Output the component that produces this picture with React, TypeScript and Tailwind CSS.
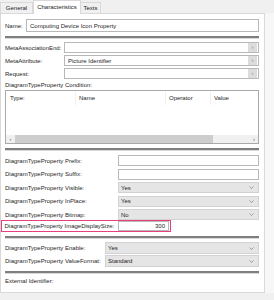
import { ReactNode } from 'react'

const Separator = () => (
  <div className="h-[3px] border-t-2 border-[#7f7f7f] border-b border-b-[#dadada]" />
)

function TextBox({ value, right, button }: { value?: string; right?: boolean; button?: boolean }) {
  return (
    <div className="flex-1 h-full flex items-center border border-[#b8b8b8] bg-white">
      <span className={`flex-1 px-[3px] leading-none ${right ? 'text-right' : ''}`}>{value}</span>
      {button && (
        <div className="w-[9px] h-[9px] mr-px flex items-center justify-center bg-[#dcdcdc] text-[#8a8a8a] text-[6px]">
          ›
        </div>
      )}
    </div>
  )
}

function Select({ value }: { value: string }) {
  return (
    <div className="flex-1 h-full flex items-center border border-[#d2d2d2] bg-[#e5e5e5] px-[2px]">
      <span className="flex-1 leading-none">{value}</span>
      <svg width="5" height="3" viewBox="0 0 5 3" className="mr-[2px]">
        <path d="M0.5 0.5 L2.5 2.5 L4.5 0.5" fill="none" stroke="#8a8a8a" strokeWidth="0.8" />
      </svg>
    </div>
  )
}

function Row({ label, labelW, h = 'h-[11px]', mt, children }: { label: string; labelW: string; h?: string; mt: string; children: ReactNode }) {
  return (
    <div className={`flex items-center ${h} ${mt}`}>
      <div className={`${labelW} shrink-0 leading-none whitespace-nowrap`}>{label}</div>
      {children}
    </div>
  )
}

export default function App() {
  return (
    <div className="w-[274px] h-[300px] bg-[#f0f0f0] font-['Liberation_Sans',Arial,sans-serif] text-[6px] text-[#1e1e1e] overflow-hidden">
      {/* Tabs */}
      <div className="flex items-end h-[13px] relative z-10">
        <div className="h-[11px] w-[33px] flex items-center justify-center border border-b-0 border-[#d9d9d9] bg-[#f0f0f0]">
          General
        </div>
        <div className="h-[14px] w-[48px] -mb-px flex items-center justify-center border border-b-0 border-[#d9d9d9] bg-white">
          Characteristics
        </div>
        <div className="h-[11px] w-[20px] flex items-center justify-center border border-b-0 border-l-0 border-[#d9d9d9] bg-[#f0f0f0]">
          Texts
        </div>
      </div>

      <div className="flex">
        {/* Panel */}
        <div className="w-[265px] h-[280px] bg-white border border-[#d9d9d9] pl-[4px] pr-[5px] flex flex-col">
          <Row label="Name:" labelW="w-[21px]" h="h-[13px]" mt="mt-[5px]">
            <TextBox value="Computing Device Icon Property" />
          </Row>
          <div className="mt-[4px]"><Separator /></div>

          <Row label="MetaAssociationEnd:" labelW="w-[59px]" mt="mt-[3px]">
            <TextBox button />
          </Row>
          <Row label="MetaAttribute:" labelW="w-[59px]" mt="mt-[2px]">
            <TextBox value="Picture Identifier" button />
          </Row>
          <Row label="Request:" labelW="w-[59px]" mt="mt-[2px]">
            <TextBox button />
          </Row>

          <div className="h-[10px] mt-px flex items-center leading-none">DiagramTypeProperty Condition:</div>

          {/* Condition table */}
          <div className="h-[54px] border border-[#a9a9a9] flex flex-col">
            <div className="flex h-[14px] items-center leading-none">
              <div className="w-[70px] h-full pl-[4px] flex items-center border-r border-[#f0f0f0]">Type:</div>
              <div className="w-[90px] h-full pl-[3px] flex items-center border-r border-[#f0f0f0]">Name</div>
              <div className="w-[45px] h-full pl-[3px] flex items-center border-r border-[#f0f0f0]">Operator</div>
              <div className="flex-1 h-full pl-[3px] flex items-center">Value</div>
            </div>
            <div className="flex-1" />
            <div className="h-[8px] flex items-center bg-[#f0f0f0] text-[#6a6a6a] leading-none">
              <span className="w-[9px] text-center">‹</span>
              <div className="w-[198px] h-full bg-[#cdcdcd]" />
              <span className="flex-1 text-right pr-[3px]">›</span>
            </div>
          </div>

          <div className="mt-[4px]"><Separator /></div>

          <Row label="DiagramTypeProperty Prefix:" labelW="w-[113px]" mt="mt-[4px]">
            <TextBox />
          </Row>
          <Row label="DiagramTypeProperty Suffix:" labelW="w-[113px]" mt="mt-[2.5px]">
            <TextBox />
          </Row>
          <Row label="DiagramTypeProperty Visible:" labelW="w-[113px]" mt="mt-[2.5px]">
            <Select value="Yes" />
          </Row>
          <Row label="DiagramTypeProperty InPlace:" labelW="w-[113px]" mt="mt-[2.5px]">
            <Select value="Yes" />
          </Row>
          <Row label="DiagramTypeProperty Bitmap:" labelW="w-[113px]" mt="mt-[2.5px]">
            <Select value="No" />
          </Row>

          {/* Highlighted row */}
          <div className="-ml-[4px] w-[170px] h-[12px] border-[1.5px] border-[#e8407a] flex items-center pl-[2.5px] pr-[1px]">
            <div className="w-[113px] shrink-0 leading-none whitespace-nowrap">DiagramTypeProperty ImageDisplaySize:</div>
            <div className="flex-1 h-[10px]">
              <TextBox value="300" right />
            </div>
          </div>

          <div className="mt-[4px]"><Separator /></div>

          <Row label="DiagramTypeProperty Enable:" labelW="w-[100px]" h="h-[12px]" mt="mt-[3px]">
            <Select value="Yes" />
          </Row>
          <Row label="DiagramTypeProperty ValueFormat:" labelW="w-[100px]" h="h-[12px]" mt="mt-px">
            <Select value="Standard" />
          </Row>

          <div className="mt-[4px]"><Separator /></div>

          <div className="h-[14px] flex items-center leading-none">External Identifier:</div>
        </div>

        {/* Right strip */}
        <div className="flex-1 h-[280px] bg-[#f7f7f7]" />
      </div>
    </div>
  )
}
